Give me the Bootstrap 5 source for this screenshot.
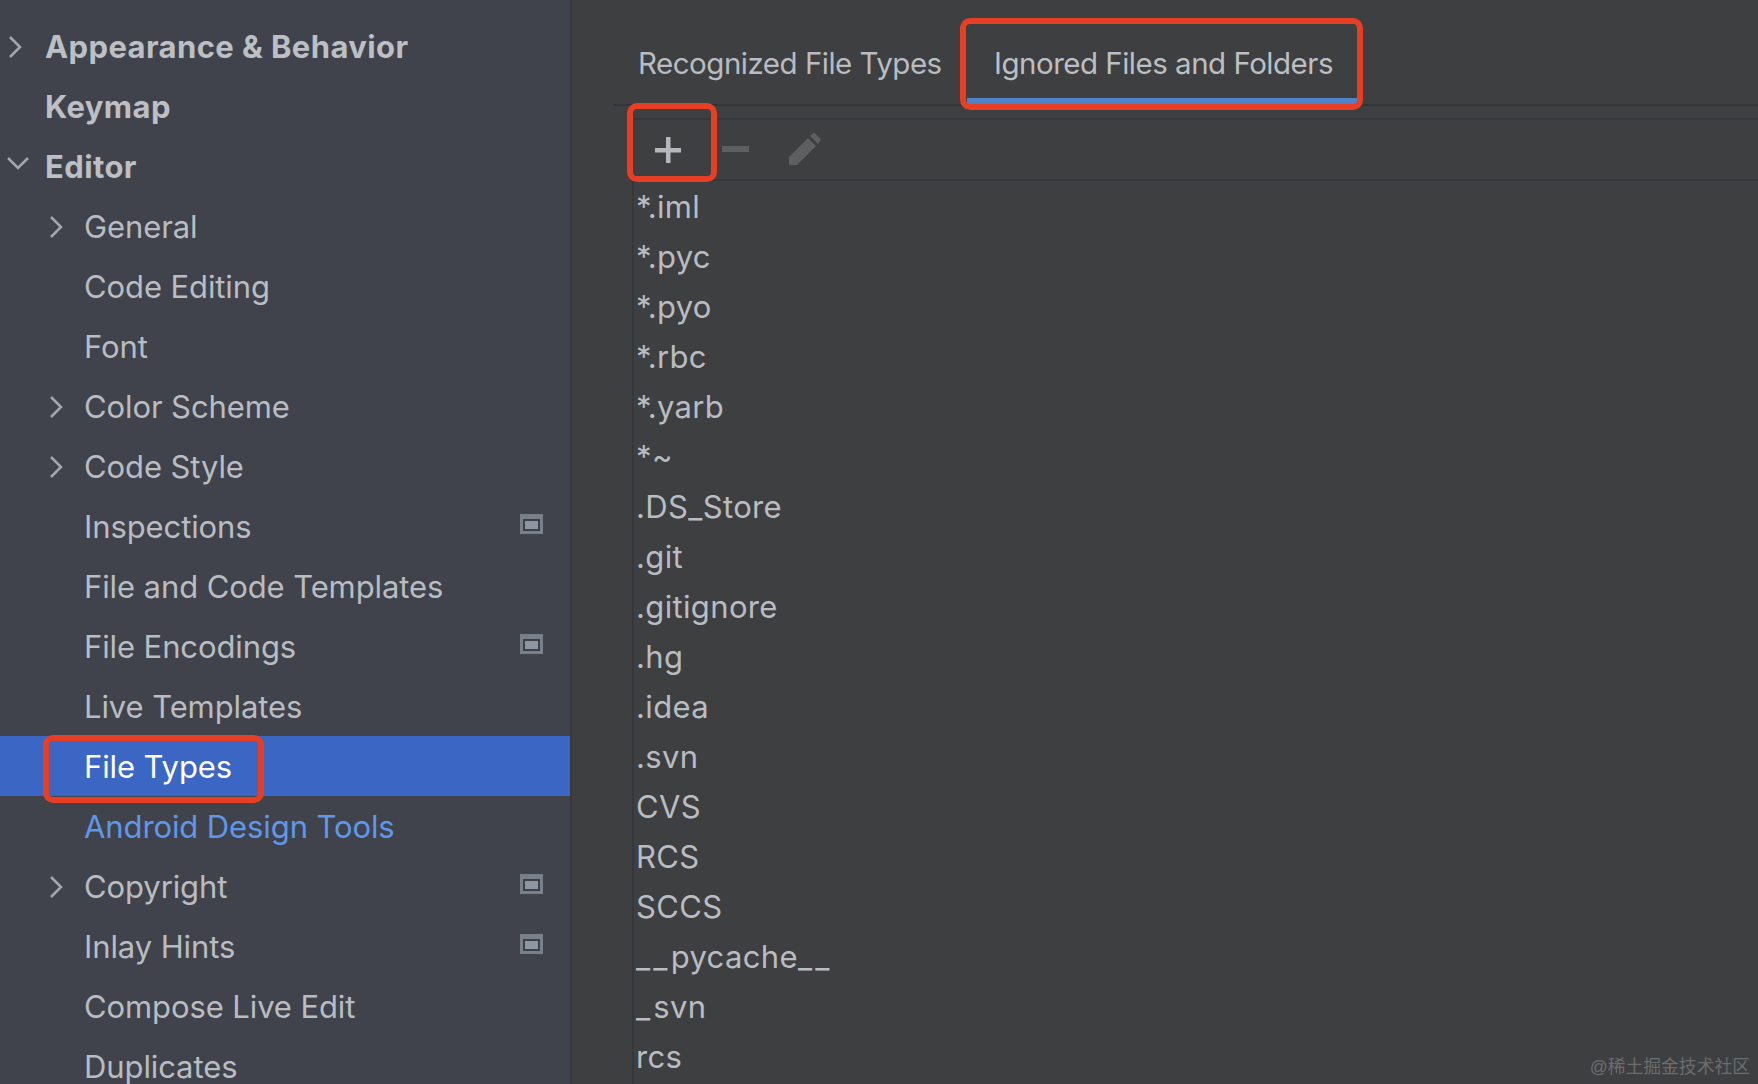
<!DOCTYPE html>
<html lang="en">
<head>
<meta charset="utf-8">
<title>Settings - File Types</title>
<link href="https://cdn.jsdelivr.net/npm/bootstrap@5.3.0/dist/css/bootstrap.min.css" rel="stylesheet">
<style>
html,body{height:100%;}
body{width:1758px;height:1084px;overflow:hidden;background:#3e3f41;font-family:Inter,"Liberation Sans",sans-serif;color:#b9bcc1;position:relative;}
.side-pane{width:570px;flex:none;height:1084px;background:#40434b;padding-top:16px;overflow:hidden;}
.split-line{width:2px;flex:none;background:#37393b;}
.main-pane{flex:1 1 auto;min-width:0;height:1084px;}
.tree-list{--bs-list-group-bg:transparent;--bs-list-group-border-width:0;--bs-list-group-color:#b9bcc1;border-radius:0;}
.tree-row{height:60px;display:flex;align-items:center;padding:2px 0 0;font-size:31px;letter-spacing:-.1px;position:relative;background:transparent;color:#b9bcc1;}
.tree-row.top-level{font-weight:700;font-size:31px;letter-spacing:.4px;color:#bcbfc4;}
.tree-row.is-selected{background:#3b66c3;color:#fff;}
.tree-row.is-link{color:#5f97ea;}
.chev-slot{flex:none;display:flex;align-items:center;justify-content:center;}
.lvl-0 .chev-slot{width:45px;padding-right:14px;}
.lvl-1 .chev-slot{width:84px;padding-left:29px;padding-right:0;}
.open-chev{margin-left:5px;}
.store-ico{position:absolute;left:520px;top:18px;width:23px;height:20px;}
.tab-strip{height:106px;margin-left:41px;padding:0;border-bottom:2px solid #333436;--bs-nav-tabs-border-width:0;}
.tab-strip .nav-link{height:104px;border:0;border-radius:0;background:transparent;color:#b9bcc1;font-size:29.5px;letter-spacing:-.5px;display:flex;align-items:center;padding:22px 0 0;}
.tab-strip .first-tab{margin-left:25px;width:329px;}
.tab-strip .nav-link.active{width:391px;padding:22px 0 0 27px;margin-left:0;color:#bcbfc4;background:transparent;box-shadow:inset 0 -6px 0 #4f82c8;}
.tool-area{margin-left:61px;}
.tool-row{height:63px;margin-top:12px;border-top:2px solid #36373a;border-bottom:2px solid #36373a;display:flex;align-items:center;position:relative;}
.pattern-wrap{margin-left:60px;border-left:2px solid #36373a;height:903px;overflow:hidden;padding-left:2px;}
.pattern-row{height:50px;line-height:50px;font-size:31px;letter-spacing:.35px;padding:1px 0 0;background:transparent;color:#b9bcc1;}
.wide-bars{letter-spacing:3.2px;}
.note-box{position:absolute;border:6px solid #e63f26;border-radius:10px;pointer-events:none;}
.note-file{left:43px;top:735px;width:221px;height:68px;}
.note-tab{left:960px;top:18px;width:403px;height:92px;}
.note-add{left:627px;top:103px;width:90px;height:79px;}
.tool-ico{position:absolute;}
.wm-text{position:absolute;right:8px;bottom:6px;font-family:"Liberation Sans","Noto Sans CJK SC",sans-serif;font-size:17.8px;color:#6c6d6f;line-height:22px;}
</style>
</head>
<body>
<div class="d-flex">
  <aside class="side-pane">
    <div class="list-group tree-list">
      <div class="list-group-item tree-row top-level lvl-0"><span class="chev-slot"><svg width="15" height="24" viewBox="0 0 15 24"><path d="M2 2l10 10L2 22" fill="none" stroke="#a4a7ac" stroke-width="2.500"/></svg></span>Appearance &amp; Behavior</div>
      <div class="list-group-item tree-row top-level lvl-0"><span class="chev-slot"></span>Keymap</div>
      <div class="list-group-item tree-row top-level lvl-0"><span class="chev-slot"><svg class="open-chev mb-2" width="24" height="14" viewBox="0 0 24 14"><path d="M2 2l10 10L22 2" fill="none" stroke="#a4a7ac" stroke-width="2.500"/></svg></span>Editor</div>
      <div class="list-group-item tree-row lvl-1"><span class="chev-slot"><svg width="15" height="24" viewBox="0 0 15 24"><path d="M2 2l10 10L2 22" fill="none" stroke="#a4a7ac" stroke-width="2.500"/></svg></span>General</div>
      <div class="list-group-item tree-row lvl-1"><span class="chev-slot"></span>Code Editing</div>
      <div class="list-group-item tree-row lvl-1"><span class="chev-slot"></span>Font</div>
      <div class="list-group-item tree-row lvl-1"><span class="chev-slot"><svg width="15" height="24" viewBox="0 0 15 24"><path d="M2 2l10 10L2 22" fill="none" stroke="#a4a7ac" stroke-width="2.500"/></svg></span>Color Scheme</div>
      <div class="list-group-item tree-row lvl-1"><span class="chev-slot"><svg width="15" height="24" viewBox="0 0 15 24"><path d="M2 2l10 10L2 22" fill="none" stroke="#a4a7ac" stroke-width="2.500"/></svg></span>Code Style</div>
      <div class="list-group-item tree-row lvl-1"><span class="chev-slot"></span>Inspections<svg class="store-ico" viewBox="0 0 23 20"><rect width="23" height="20" fill="#7a808a"/><rect x="3" y="5" width="17" height="12" fill="#3d4047"/><rect x="5" y="7" width="13" height="8" fill="#8c97a3"/></svg></div>
      <div class="list-group-item tree-row lvl-1"><span class="chev-slot"></span>File and Code Templates</div>
      <div class="list-group-item tree-row lvl-1"><span class="chev-slot"></span>File Encodings<svg class="store-ico" viewBox="0 0 23 20"><rect width="23" height="20" fill="#7a808a"/><rect x="3" y="5" width="17" height="12" fill="#3d4047"/><rect x="5" y="7" width="13" height="8" fill="#8c97a3"/></svg></div>
      <div class="list-group-item tree-row lvl-1"><span class="chev-slot"></span>Live Templates</div>
      <div class="list-group-item tree-row lvl-1 is-selected"><span class="chev-slot"></span>File Types</div>
      <div class="list-group-item tree-row lvl-1 is-link"><span class="chev-slot"></span>Android Design Tools</div>
      <div class="list-group-item tree-row lvl-1"><span class="chev-slot"><svg width="15" height="24" viewBox="0 0 15 24"><path d="M2 2l10 10L2 22" fill="none" stroke="#a4a7ac" stroke-width="2.500"/></svg></span>Copyright<svg class="store-ico" viewBox="0 0 23 20"><rect width="23" height="20" fill="#7a808a"/><rect x="3" y="5" width="17" height="12" fill="#3d4047"/><rect x="5" y="7" width="13" height="8" fill="#8c97a3"/></svg></div>
      <div class="list-group-item tree-row lvl-1"><span class="chev-slot"></span>Inlay Hints<svg class="store-ico" viewBox="0 0 23 20"><rect width="23" height="20" fill="#7a808a"/><rect x="3" y="5" width="17" height="12" fill="#3d4047"/><rect x="5" y="7" width="13" height="8" fill="#8c97a3"/></svg></div>
      <div class="list-group-item tree-row lvl-1"><span class="chev-slot"></span>Compose Live Edit</div>
      <div class="list-group-item tree-row lvl-1"><span class="chev-slot"></span>Duplicates</div>
    </div>
  </aside>
  <div class="split-line"></div>
  <main class="main-pane">
    <ul class="nav nav-tabs tab-strip">
      <li class="nav-item"><a class="nav-link first-tab" href="#">Recognized File Types</a></li>
      <li class="nav-item"><a class="nav-link active" href="#">Ignored Files and Folders</a></li>
    </ul>
    <div class="tool-area">
      <div class="tool-row">
        <svg class="tool-ico" style="left:21px;top:16px" width="28" height="28" viewBox="0 0 28 28"><path d="M12 1h4.500v11H27v4.500H16.500V27H12V16.500H1V12h11z" fill="#b4b7bb"/></svg>
        <svg class="tool-ico" style="left:89px;top:26px" width="27" height="6" viewBox="0 0 27 6"><rect width="27" height="6" fill="#5d5f61"/></svg>
        <svg class="tool-ico" style="left:155px;top:12px" width="34" height="34" viewBox="0 0 34 34"><path d="M1 33v-8L20 6l8 8L9 33zM22 4l4-3.500 7 7L30 12z" fill="#5d5f61"/></svg>
      </div>
    </div>
    <div class="pattern-wrap">
      <div class="list-group tree-list">
        <div class="list-group-item pattern-row">*.iml</div>
        <div class="list-group-item pattern-row">*.pyc</div>
        <div class="list-group-item pattern-row">*.pyo</div>
        <div class="list-group-item pattern-row">*.rbc</div>
        <div class="list-group-item pattern-row">*.yarb</div>
        <div class="list-group-item pattern-row">*~</div>
        <div class="list-group-item pattern-row">.DS_Store</div>
        <div class="list-group-item pattern-row">.git</div>
        <div class="list-group-item pattern-row">.gitignore</div>
        <div class="list-group-item pattern-row">.hg</div>
        <div class="list-group-item pattern-row">.idea</div>
        <div class="list-group-item pattern-row">.svn</div>
        <div class="list-group-item pattern-row">CVS</div>
        <div class="list-group-item pattern-row">RCS</div>
        <div class="list-group-item pattern-row">SCCS</div>
        <div class="list-group-item pattern-row"><span class="wide-bars">__</span>pycache<span class="wide-bars">__</span></div>
        <div class="list-group-item pattern-row"><span class="wide-bars">_</span>svn</div>
        <div class="list-group-item pattern-row">rcs</div>
      </div>
    </div>
  </main>
</div>
<div class="note-box note-file"></div>
<div class="note-box note-tab"></div>
<div class="note-box note-add"></div>
<div class="wm-text">@稀土掘金技术社区</div>
<script src="https://cdn.jsdelivr.net/npm/bootstrap@5.3.0/dist/js/bootstrap.bundle.min.js"></script>
</body>
</html>
